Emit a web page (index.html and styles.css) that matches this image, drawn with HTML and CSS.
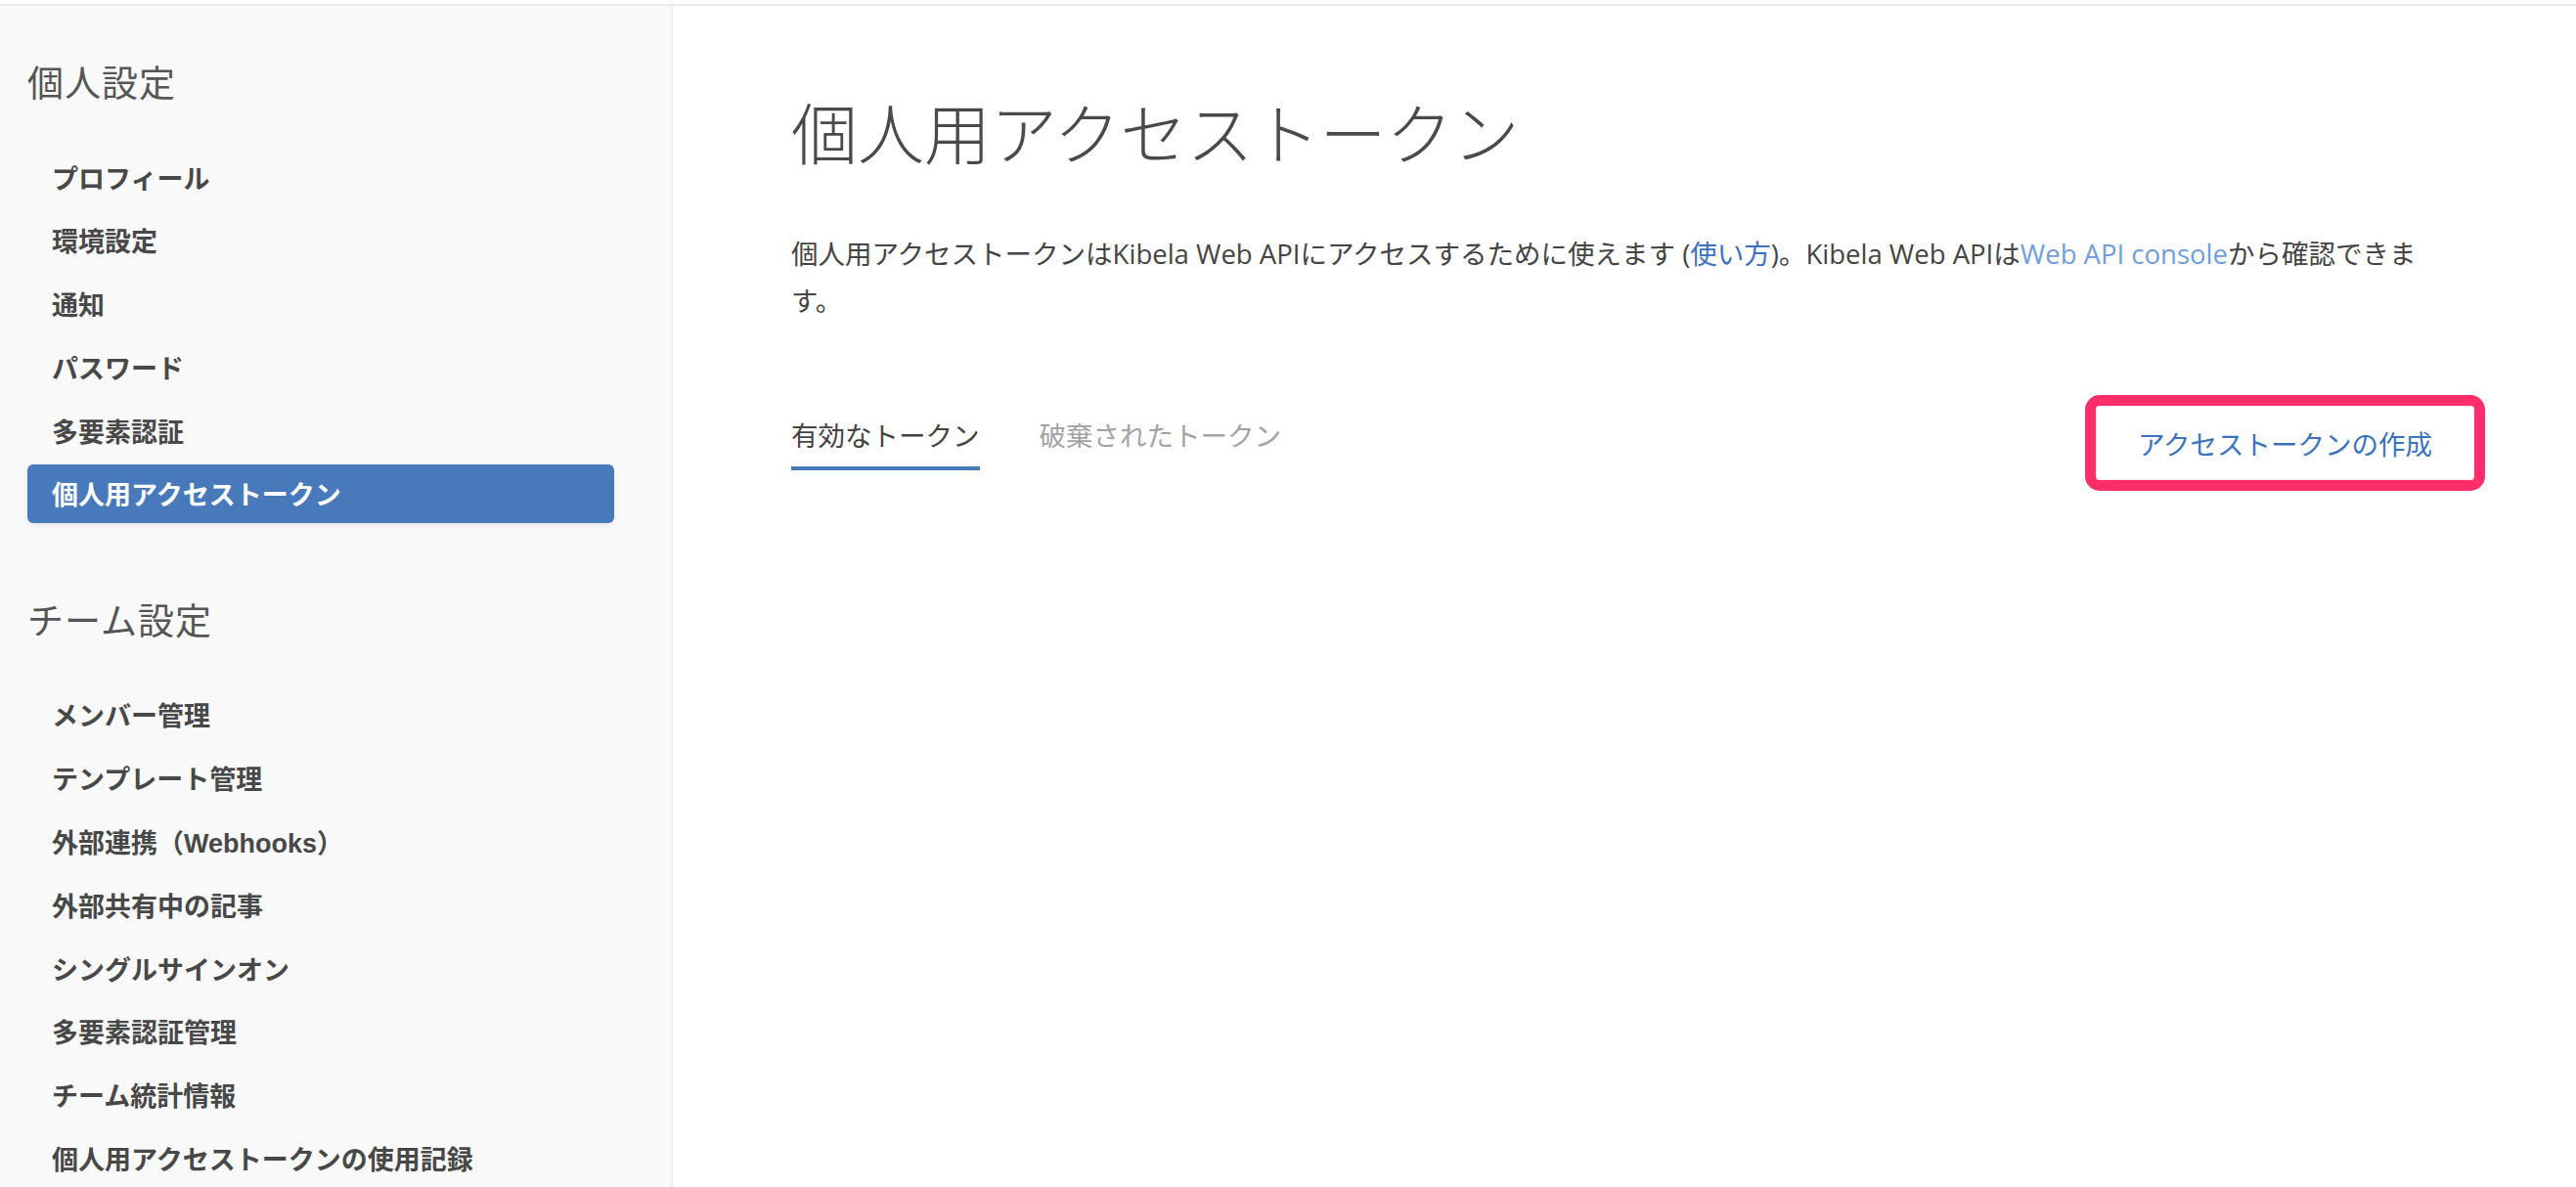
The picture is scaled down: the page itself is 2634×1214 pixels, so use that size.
FILE: index.html
```html
<!DOCTYPE html>
<html lang="ja">
<head>
<meta charset="utf-8">
<title>個人用アクセストークン</title>
<link rel="stylesheet" href="styles.css">
</head>
<body>
<div class="topbar"></div>
<div class="layout">
  <aside class="sidebar">
    <section class="side-section">
      <h2 class="side-heading">個人設定</h2>
      <ul class="side-menu">
        <li class="side-item">プロフィール</li>
        <li class="side-item">環境設定</li>
        <li class="side-item">通知</li>
        <li class="side-item">パスワード</li>
        <li class="side-item">多要素認証</li>
        <li class="side-item is-active">個人用アクセストークン</li>
      </ul>
    </section>
    <section class="side-section">
      <h2 class="side-heading">チーム設定</h2>
      <ul class="side-menu">
        <li class="side-item">メンバー管理</li>
        <li class="side-item">テンプレート管理</li>
        <li class="side-item">外部連携（Webhooks）</li>
        <li class="side-item">外部共有中の記事</li>
        <li class="side-item">シングルサインオン</li>
        <li class="side-item">多要素認証管理</li>
        <li class="side-item">チーム統計情報</li>
        <li class="side-item">個人用アクセストークンの使用記録</li>
      </ul>
    </section>
  </aside>
  <main class="main">
    <h1 class="page-title">個人用アクセストークン</h1>
    <p class="desc">個人用アクセストークンはKibela Web APIにアクセスするために使えます (<a class="link" href="#">使い方</a>)。Kibela Web APIは<a class="link link-light" href="#">Web API console</a>から確認できます。</p>
    <div class="tab-row">
      <nav class="tabs">
        <span class="tab is-current">有効なトークン</span>
        <span class="tab">破棄されたトークン</span>
      </nav>
      <span class="highlight">
        <button class="create-btn" type="button">アクセストークンの作成</button>
      </span>
    </div>
  </main>
</div>
</body>
</html>
```

FILE: styles.css
```css
html, body {
  margin: 0;
  padding: 0;
  overflow: hidden;
  background: #ffffff;
}

body {
  font-family: "Open Sans", "Noto Sans CJK JP", sans-serif;
  color: #444444;
}

.topbar {
  height: 4px;
  border-bottom: 2px solid #ececec;
  background: #ffffff;
}

.layout {
  display: flex;
  min-height: calc(100vh - 6px);
}

.sidebar {
  width: 688px;
  flex: 0 0 688px;
  background: #f9f9f9;
  border-right: 2px solid #eeeeee;
  padding: 55px 0 0 28px;
  box-sizing: border-box;
}

.side-section {
  margin-bottom: 76px;
}

.side-heading {
  margin: 0 0 46px 0;
  font-family: "Noto Sans CJK JP", sans-serif;
  font-weight: 400;
  font-size: 37px;
  line-height: 44px;
  color: #555555;
  letter-spacing: 1px;
}

.side-menu {
  list-style: none;
  margin: 0;
  padding: 0;
  display: flex;
  flex-direction: column;
  gap: 4.8px;
}

.side-item {
  width: 600px;
  height: 60px;
  box-sizing: border-box;
  padding-left: 25px;
  display: flex;
  align-items: center;
  font-family: "Liberation Sans", "Noto Sans CJK JP", sans-serif;
  font-size: 27px;
  font-weight: 700;
  color: #484848;
  border-radius: 6px;
}

.side-item.is-active {
  background: #4779bb;
  color: #ffffff;
  box-shadow: 0 2px 6px rgba(0, 0, 0, 0.08);
}

.main {
  flex: 1;
  padding: 88px 93px 0 121px;
  min-width: 0;
}

.page-title {
  margin: 0;
  font-family: "Noto Sans CJK JP", sans-serif;
  font-weight: 300;
  font-size: 68px;
  line-height: 80px;
  color: #4a4a4a;
}

.desc {
  max-width: 1700px;
  margin: 62px 0 0 0;
  font-size: 27.5px;
  line-height: 48px;
  color: #444444;
}

.link {
  color: #3a72c0;
  text-decoration: none;
}

.link-light {
  color: #6f9edb;
}

.tab-row {
  margin-top: 72px;
  display: flex;
  align-items: center;
  justify-content: space-between;
}

.tabs {
  display: flex;
  gap: 61px;
}

.tab {
  font-size: 27.5px;
  line-height: 40px;
  padding-bottom: 11px;
  border-bottom: 4px solid transparent;
  color: #a3a3a3;
}

.tab.is-current {
  color: #444444;
  border-bottom-color: #4779bb;
}

.highlight {
  display: inline-flex;
  border: 11px solid #ff2e6a;
  border-radius: 15px;
}

.create-btn {
  width: 387px;
  height: 76px;
  border: 1px solid #f0f0f0;
  border-radius: 4px;
  background: #ffffff;
  color: #3a72c0;
  font-family: "Open Sans", "Noto Sans CJK JP", sans-serif;
  font-size: 27.5px;
  padding: 0;
}
```
